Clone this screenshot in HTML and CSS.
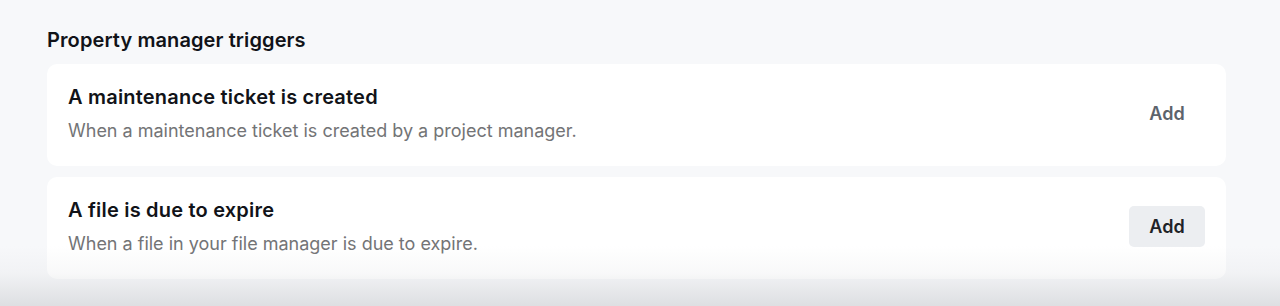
FILE: index.html
```html
<!DOCTYPE html>
<html lang="en">
    <head>
        <meta charset="UTF-8">
        <meta name="viewport" content="width=device-width, initial-scale=1.0">
        <title>Triggers</title>
        <link rel="stylesheet" href="styles.css">
    </head>
    <body>
        <div class="triggers">
            <h2>Property manager triggers</h2>
            <div class="card">
                <div class="info">
                    <h3>A maintenance ticket is created</h3>
                    <p>When a maintenance ticket is created by a project manager.</p>
                </div>
                <button type="button" class="btnAdd ghost">Add</button>
            </div>
            <div class="card">
                <div class="info">
                    <h3>A file is due to expire</h3>
                    <p>When a file in your file manager is due to expire.</p>
                </div>
                <button type="button" class="btnAdd">Add</button>
            </div>
        </div>
        <div class="fade"></div>
    </body>
</html>
```
FILE: styles.css
```css
body {
    margin: 0;
    font-family: Inter, "Noto Sans", Arial, sans-serif;
    background-color: #f7f8fa;
    color: #111318;
    height: 306px;
    overflow: hidden;
}

.triggers {
    padding: 28px 54px 0 47px;
}

h2 {
    margin: 0 0 12px 0;
    font-size: 20px;
    line-height: 24px;
    font-weight: 600;
    letter-spacing: 0.1px;
}

.card {
    background-color: #fff;
    border-radius: 10px;
    padding: 20px 21px 23px 21px;
    display: flex;
    align-items: center;
    justify-content: space-between;
    margin-bottom: 11px;
}

.card h3 {
    margin: 0 0 9px 0;
    font-size: 20px;
    line-height: 26px;
    font-weight: 600;
    letter-spacing: 0.2px;
}

.card p {
    margin: 0;
    font-size: 18px;
    line-height: 24px;
    color: #737476;
}

.btnAdd {
    font-family: inherit;
    font-size: 18px;
    font-weight: 600;
    color: #1f2328;
    background-color: #eceef1;
    border: none;
    border-radius: 5px;
    width: 76px;
    height: 41px;
    cursor: pointer;
}

.ghost {
    background-color: transparent;
    color: #5c636c;
    margin-bottom: 1px;
}

.fade {
    position: absolute;
    left: 0;
    right: 0;
    bottom: 0;
    height: 60px;
    background-image: linear-gradient(to bottom, rgba(200, 202, 206, 0) 0%, rgba(200, 202, 206, 0.12) 45%, rgba(200, 202, 206, 0.55) 100%);
    pointer-events: none;
}
```
